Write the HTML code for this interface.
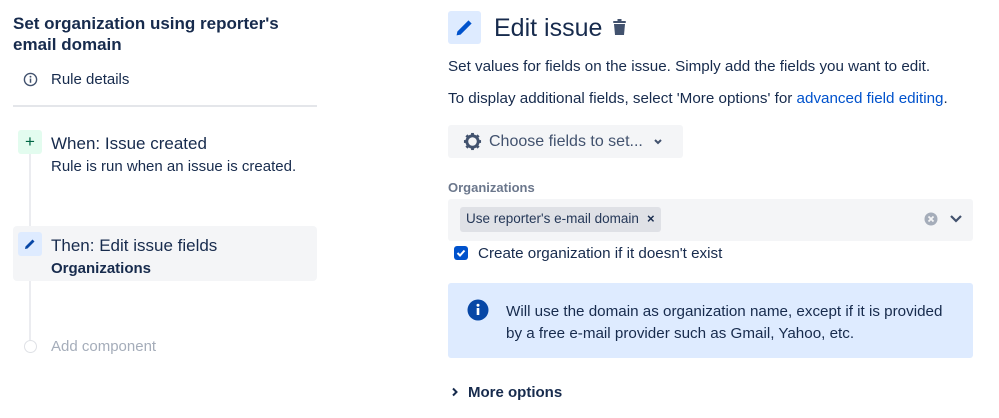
<!DOCTYPE html>
<html><head><meta charset="utf-8"><style>
*{margin:0;padding:0;box-sizing:border-box}
body{width:999px;height:418px;background:#fff;font-family:"Liberation Sans",sans-serif;color:#172b4d;position:relative;overflow:hidden}
.a{position:absolute;white-space:nowrap}
</style></head><body>
<div class="a" style="left:13px;top:13px;font-size:17px;font-weight:bold;line-height:21px">Set organization using reporter's<br>email domain</div>
<svg class="a" style="left:23px;top:72px" width="15" height="15" viewBox="0 0 16 16"><circle cx="8" cy="8" r="6.5" fill="none" stroke="#42526e" stroke-width="1.5"/><rect x="7.2" y="7" width="1.6" height="4.5" fill="#42526e"/><circle cx="8" cy="5" r="1" fill="#42526e"/></svg>
<div class="a" style="left:51px;top:71px;font-size:15px">Rule details</div>
<div class="a" style="left:13px;top:105px;width:304px;height:2px;background:#e4e6ea"></div>
<div class="a" style="left:29px;top:154px;width:2px;height:186px;background:#ebecf0"></div>
<div class="a" style="left:18px;top:130px;width:24px;height:24px;background:#e3fcef;border-radius:3px;color:#006644;font-size:17px;text-align:center;line-height:24px">+</div>
<div class="a" style="left:51px;top:134px;font-size:17px">When: Issue created</div>
<div class="a" style="left:51px;top:158px;font-size:15px">Rule is run when an issue is created.</div>
<div class="a" style="left:13px;top:226px;width:304px;height:55px;background:#f4f5f7;border-radius:4px"></div>
<div class="a" style="left:18px;top:232px;width:24px;height:24px;background:#deebff;border-radius:3px"></div>
<svg class="a" style="left:24px;top:238px" width="12" height="12" viewBox="0 0 12 12"><path d="M1 11 L1.5 8.5 L8.5 1.5 L10.5 3.5 L3.5 10.5 Z" fill="#0747a6"/></svg>
<div class="a" style="left:51px;top:236px;font-size:17px">Then: Edit issue fields</div>
<div class="a" style="left:51px;top:260px;font-size:15px;font-weight:bold">Organizations</div>
<div class="a" style="left:24px;top:340px;width:13px;height:13px;border:1.5px solid #dfe1e6;border-radius:50%;background:#fff"></div>
<div class="a" style="left:51px;top:338px;font-size:15px;color:#a5adba">Add component</div>

<div class="a" style="left:448px;top:11px;width:33px;height:33px;background:#deebff;border-radius:3px"></div>
<svg class="a" style="left:455px;top:18px" width="19" height="19" viewBox="0 0 12 12"><path d="M1 11 L1.5 8.5 L8.5 1.5 L10.5 3.5 L3.5 10.5 Z" fill="#0052cc"/></svg>
<div class="a" style="left:494px;top:14px;font-size:25px">Edit issue</div>
<svg class="a" style="left:613px;top:19px" width="13" height="16" viewBox="0 0 13 16"><rect x="0" y="2" width="13" height="2" rx="1" fill="#42526e"/><rect x="4.5" y="0" width="4" height="3" fill="#42526e"/><path d="M1 5 H12 L11 16 H2 Z" fill="#42526e"/></svg>
<div class="a" style="left:448px;top:58px;font-size:15.2px">Set values for fields on the issue. Simply add the fields you want to edit.</div>
<div class="a" style="left:448px;top:90px;font-size:15.2px">To display additional fields, select 'More options' for <span style="color:#0052cc">advanced field editing</span>.</div>
<div class="a" style="left:448px;top:125px;width:235px;height:33px;background:#f4f5f7;border-radius:3px"></div>
<svg class="a" style="left:463px;top:132px" width="19" height="19" viewBox="0 0 20 20"><circle cx="10" cy="10" r="6" fill="none" stroke="#42526e" stroke-width="3"/><g stroke="#42526e" stroke-width="3"><line x1="10" y1="1" x2="10" y2="4"/><line x1="10" y1="16" x2="10" y2="19"/><line x1="1" y1="10" x2="4" y2="10"/><line x1="16" y1="10" x2="19" y2="10"/><line x1="3.6" y1="3.6" x2="5.8" y2="5.8"/><line x1="14.2" y1="14.2" x2="16.4" y2="16.4"/><line x1="3.6" y1="16.4" x2="5.8" y2="14.2"/><line x1="14.2" y1="5.8" x2="16.4" y2="3.6"/></g></svg>
<div class="a" style="left:489px;top:133px;font-size:16px;color:#42526e">Choose fields to set...</div>
<svg class="a" style="left:653px;top:138px" width="10" height="7" viewBox="0 0 10 7"><path d="M2 2 L5 5 L8 2" fill="none" stroke="#42526e" stroke-width="2"/></svg>
<div class="a" style="left:448px;top:180px;font-size:13px;font-weight:bold;color:#6b778c">Organizations</div>
<div class="a" style="left:448px;top:199px;width:525px;height:42px;background:#f4f5f7;border-radius:3px"></div>
<div class="a" style="left:460px;top:207px;width:201px;height:25px;background:#dfe1e6;border-radius:3px"></div>
<div class="a" style="left:466px;top:211px;font-size:13.5px;color:#253858">Use reporter's e-mail domain</div>
<div class="a" style="left:647px;top:211px;font-size:13px;font-weight:bold;color:#172b4d">×</div>
<svg class="a" style="left:924px;top:212px" width="14" height="14" viewBox="0 0 14 14"><circle cx="7" cy="7" r="6.5" fill="#a5adba"/><path d="M4.5 4.5 L9.5 9.5 M9.5 4.5 L4.5 9.5" stroke="#f4f5f7" stroke-width="1.8"/></svg>
<svg class="a" style="left:949px;top:214px" width="14" height="10" viewBox="0 0 14 10"><path d="M2 2 L7 7 L12 2" fill="none" stroke="#42526e" stroke-width="2.2"/></svg>
<div class="a" style="left:454px;top:246px;width:14px;height:14px;background:#0052cc;border-radius:3px"></div>
<svg class="a" style="left:454px;top:246px" width="14" height="14" viewBox="0 0 14 14"><path d="M3.5 7 L6 9.5 L10.5 4.5" fill="none" stroke="#fff" stroke-width="2"/></svg>
<div class="a" style="left:478px;top:245px;font-size:15.2px">Create organization if it doesn't exist</div>
<div class="a" style="left:448px;top:283px;width:525px;height:75px;background:#deebff;border-radius:3px"></div>
<svg class="a" style="left:467px;top:299px" width="22" height="22" viewBox="0 0 22 22"><circle cx="11" cy="11" r="10.5" fill="#0747a6"/><rect x="9.7" y="9" width="2.6" height="7" fill="#fff"/><circle cx="11" cy="6.3" r="1.5" fill="#fff"/></svg>
<div class="a" style="left:506px;top:301px;font-size:15.2px;line-height:22px">Will use the domain as organization name, except if it is provided<br>by a free e-mail provider such as Gmail, Yahoo, etc.</div>
<svg class="a" style="left:451px;top:387px" width="8" height="10" viewBox="0 0 8 10"><path d="M2 1.5 L5.5 5 L2 8.5" fill="none" stroke="#172b4d" stroke-width="2"/></svg>
<div class="a" style="left:468px;top:384px;font-size:15px;font-weight:bold">More options</div>
</body></html>
